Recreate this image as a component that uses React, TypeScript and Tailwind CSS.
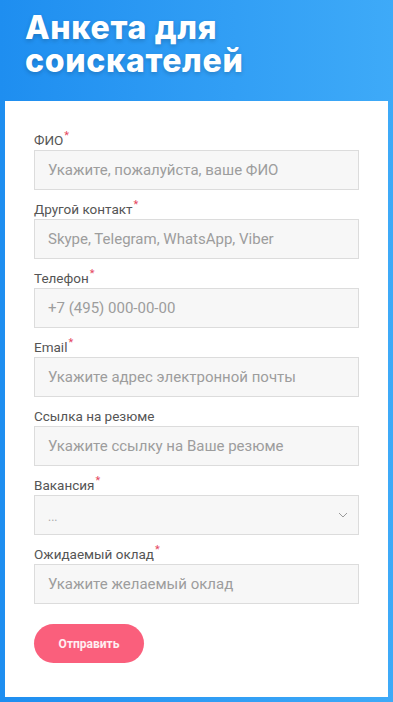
import React from "react";

const fields = [
  { label: "ФИО", req: true, ph: "Укажите, пожалуйста, ваше ФИО" },
  { label: "Другой контакт", req: true, ph: "Skype, Telegram, WhatsApp, Viber" },
  { label: "Телефон", req: true, ph: "+7 (495) 000-00-00" },
  { label: "Email", req: true, ph: "Укажите адрес электронной почты" },
  { label: "Ссылка на резюме", req: false, ph: "Укажите ссылку на Ваше резюме" },
];

function Label({ text, req }: { text: string; req: boolean }) {
  return (
    <div className="h-[20px] flex items-center text-[13.5px] text-[#555] leading-[20px]">
      <span>{text}</span>
      {req && <span className="text-[#e5475f] text-[11px] relative -top-[4px] ml-[1px]">*</span>}
    </div>
  );
}

function Input({ ph }: { ph: string }) {
  return (
    <div className="h-[40px] border border-[#dcdcdc] bg-[#f7f7f7] flex items-center pl-[13px] text-[15px] text-[#9d9d9d]">
      {ph}
    </div>
  );
}

export default function App() {
  return (
    <div
      className="w-[393px] h-[702px] overflow-hidden bg-gradient-to-r from-[#1e8ef0] to-[#3eaaf8] flex flex-col"
      style={{ fontFamily: "Roboto, 'Liberation Sans', sans-serif" }}
    >
      <div className="h-[101px] pl-[25px] pt-[11px]">
        <h1
          className="text-white text-[32px] leading-[33px] font-extrabold tracking-[0.7px] [text-shadow:0_2px_4px_rgba(0,0,0,0.18)]"
          style={{ fontFamily: "Inter, 'Noto Sans', sans-serif" }}
        >
          Анкета для
          <br />
          соискателей
        </h1>
      </div>
      <div className="mx-[5px] flex-1 bg-white px-[29px] pt-[29px] flex flex-col">
        <div className="flex flex-col gap-[9px]">
          {fields.map((f) => (
            <div key={f.label} className="flex flex-col">
              <Label text={f.label} req={f.req} />
              <Input ph={f.ph} />
            </div>
          ))}
          <div className="flex flex-col">
            <Label text="Вакансия" req={true} />
            <div className="h-[40px] border border-[#dcdcdc] bg-[#f7f7f7] flex items-center justify-between pl-[13px] pr-[10px] text-[12px] text-[#aaa]">
              <span className="mt-[4px]">...</span>
              <svg width="10" height="6" viewBox="0 0 10 6" fill="none">
                <path d="M1 1l4 4 4-4" stroke="#9a9a9a" strokeWidth="1" />
              </svg>
            </div>
          </div>
          <div className="flex flex-col">
            <Label text="Ожидаемый оклад" req={true} />
            <Input ph="Укажите желаемый оклад" />
          </div>
        </div>
        <button className="mt-[20px] w-[110px] h-[39px] rounded-full bg-[#fa5f7c] text-white/90 text-[12px] font-bold">
          Отправить
        </button>
      </div>
      <div className="h-[5px] shrink-0" />
    </div>
  );
}
